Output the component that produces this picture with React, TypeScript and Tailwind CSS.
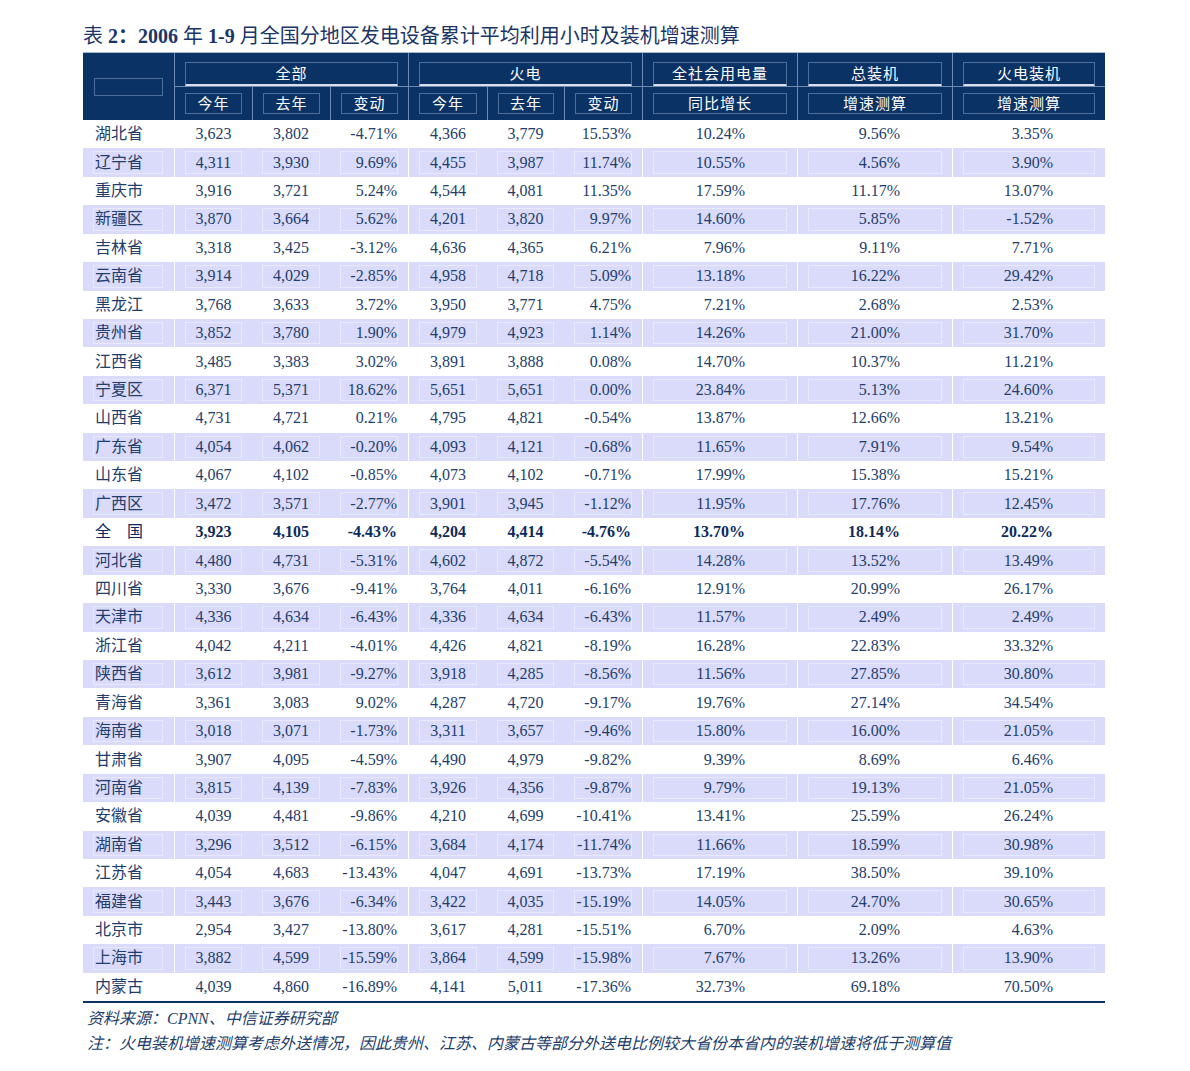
import React from "react";

type RowData = [string, string, string, string, string, string, string, string, string, string];

const rows: RowData[] = [
  ["湖北省", "3,623", "3,802", "-4.71%", "4,366", "3,779", "15.53%", "10.24%", "9.56%", "3.35%"],
  ["辽宁省", "4,311", "3,930", "9.69%", "4,455", "3,987", "11.74%", "10.55%", "4.56%", "3.90%"],
  ["重庆市", "3,916", "3,721", "5.24%", "4,544", "4,081", "11.35%", "17.59%", "11.17%", "13.07%"],
  ["新疆区", "3,870", "3,664", "5.62%", "4,201", "3,820", "9.97%", "14.60%", "5.85%", "-1.52%"],
  ["吉林省", "3,318", "3,425", "-3.12%", "4,636", "4,365", "6.21%", "7.96%", "9.11%", "7.71%"],
  ["云南省", "3,914", "4,029", "-2.85%", "4,958", "4,718", "5.09%", "13.18%", "16.22%", "29.42%"],
  ["黑龙江", "3,768", "3,633", "3.72%", "3,950", "3,771", "4.75%", "7.21%", "2.68%", "2.53%"],
  ["贵州省", "3,852", "3,780", "1.90%", "4,979", "4,923", "1.14%", "14.26%", "21.00%", "31.70%"],
  ["江西省", "3,485", "3,383", "3.02%", "3,891", "3,888", "0.08%", "14.70%", "10.37%", "11.21%"],
  ["宁夏区", "6,371", "5,371", "18.62%", "5,651", "5,651", "0.00%", "23.84%", "5.13%", "24.60%"],
  ["山西省", "4,731", "4,721", "0.21%", "4,795", "4,821", "-0.54%", "13.87%", "12.66%", "13.21%"],
  ["广东省", "4,054", "4,062", "-0.20%", "4,093", "4,121", "-0.68%", "11.65%", "7.91%", "9.54%"],
  ["山东省", "4,067", "4,102", "-0.85%", "4,073", "4,102", "-0.71%", "17.99%", "15.38%", "15.21%"],
  ["广西区", "3,472", "3,571", "-2.77%", "3,901", "3,945", "-1.12%", "11.95%", "17.76%", "12.45%"],
  ["全国", "3,923", "4,105", "-4.43%", "4,204", "4,414", "-4.76%", "13.70%", "18.14%", "20.22%"],
  ["河北省", "4,480", "4,731", "-5.31%", "4,602", "4,872", "-5.54%", "14.28%", "13.52%", "13.49%"],
  ["四川省", "3,330", "3,676", "-9.41%", "3,764", "4,011", "-6.16%", "12.91%", "20.99%", "26.17%"],
  ["天津市", "4,336", "4,634", "-6.43%", "4,336", "4,634", "-6.43%", "11.57%", "2.49%", "2.49%"],
  ["浙江省", "4,042", "4,211", "-4.01%", "4,426", "4,821", "-8.19%", "16.28%", "22.83%", "33.32%"],
  ["陕西省", "3,612", "3,981", "-9.27%", "3,918", "4,285", "-8.56%", "11.56%", "27.85%", "30.80%"],
  ["青海省", "3,361", "3,083", "9.02%", "4,287", "4,720", "-9.17%", "19.76%", "27.14%", "34.54%"],
  ["海南省", "3,018", "3,071", "-1.73%", "3,311", "3,657", "-9.46%", "15.80%", "16.00%", "21.05%"],
  ["甘肃省", "3,907", "4,095", "-4.59%", "4,490", "4,979", "-9.82%", "9.39%", "8.69%", "6.46%"],
  ["河南省", "3,815", "4,139", "-7.83%", "3,926", "4,356", "-9.87%", "9.79%", "19.13%", "21.05%"],
  ["安徽省", "4,039", "4,481", "-9.86%", "4,210", "4,699", "-10.41%", "13.41%", "25.59%", "26.24%"],
  ["湖南省", "3,296", "3,512", "-6.15%", "3,684", "4,174", "-11.74%", "11.66%", "18.59%", "30.98%"],
  ["江苏省", "4,054", "4,683", "-13.43%", "4,047", "4,691", "-13.73%", "17.19%", "38.50%", "39.10%"],
  ["福建省", "3,443", "3,676", "-6.34%", "3,422", "4,035", "-15.19%", "14.05%", "24.70%", "30.65%"],
  ["北京市", "2,954", "3,427", "-13.80%", "3,617", "4,281", "-15.51%", "6.70%", "2.09%", "4.63%"],
  ["上海市", "3,882", "4,599", "-15.59%", "3,864", "4,599", "-15.98%", "7.67%", "13.26%", "13.90%"],
  ["内蒙古", "4,039", "4,860", "-16.89%", "4,141", "5,011", "-17.36%", "32.73%", "69.18%", "70.50%"],
];

// column widths, left to right (label + 9 value columns)
const widths = [
  "w-[91px]",
  "w-[78px]",
  "w-[78px]",
  "w-[78px]",
  "w-[79px]",
  "w-[77px]",
  "w-[78px]",
  "w-[155px]",
  "w-[155px]",
  "w-[153px]",
];

const groupStart = [1, 4, 7, 8, 9];

function DataRow({ r, i }: { r: RowData; i: number }) {
  const shaded = i % 2 === 1;
  const total = r[0] === "全国";
  const boxBorder = shaded ? "border-[#e9e9fd]" : "border-transparent";

  return (
    <div
      className={`flex h-[28.43px] ${shaded ? "bg-[#dadbfb]" : "bg-white"} ${
        total ? "font-bold text-[#0e2a5c]" : "text-[#233d6b]"
      }`}
    >
      {r.map((v, c) => {
        const border = groupStart.includes(c) ? "border-l border-white" : "";
        if (c === 0) {
          return (
            <div key={c} className={`${widths[c]} pl-[10px] pr-[11px] py-[3px]`}>
              <div className={`h-full border ${boxBorder} flex items-center pl-[1px] font-normal`}>
                {total ? (
                  <span className="flex gap-[16px]">
                    <span>全</span>
                    <span>国</span>
                  </span>
                ) : (
                  v
                )}
              </div>
            </div>
          );
        }
        const change = c === 3 || c === 6;
        const wide = c >= 7;
        return (
          <div key={c} className={`${widths[c]} ${border} pl-[10px] pr-[10px] py-[3px]`}>
            <div
              className={`h-full border ${boxBorder} flex items-center ${
                wide ? "justify-end pr-[41px]" : change ? "justify-end pr-[0px]" : "justify-center"
              }`}
            >
              {v}
            </div>
          </div>
        );
      })}
    </div>
  );
}

function GroupHead({ label, w }: { label: string; w: string }) {
  return (
    <div className={`${w} border-l border-[#6f89b0] pl-[10px] pr-[10px] pt-[9px]`}>
      <div className="h-[24px] border border-[#4d6d9b] border-b-2 border-b-[#d7e0ec] flex items-center justify-center">
        {label}
      </div>
    </div>
  );
}

function SubHead({ label, w }: { label: string; w: string }) {
  return (
    <div className={`${w} border-l border-[#6f89b0] pl-[10px] pr-[10px] pt-[6px]`}>
      <div className="h-[21px] border border-[#4d6d9b] flex items-center justify-center">{label}</div>
    </div>
  );
}

export default function App() {
  return (
    <div className="min-h-screen bg-white pl-[83px] pt-[22px] font-['Liberation_Serif','Noto_Sans_CJK_SC',serif]">
      {/* title */}
      <h1 className="h-[30px] text-[20px] leading-[28px] text-[#1c3567]">
        表 <b>2：2006</b> 年 <b>1-9</b> 月全国分地区发电设备累计平均利用小时及装机增速测算
      </h1>

      <div className="w-[1022px]">
        {/* header */}
        <div className="flex h-[68px] bg-[#0b3264] border-t border-[#a9b8cf] text-white text-[15px] tracking-[1px] font-['Noto_Sans_CJK_SC',sans-serif]">
          <div className="w-[91px] flex items-center pl-[11px] pr-[11px]">
            <div className="w-full h-[18px] border border-[#4d6d9b]" />
          </div>
          <div className="flex-1 flex flex-col">
            <div className="flex h-[33px]">
              <GroupHead label="全部" w="w-[234px]" />
              <GroupHead label="火电" w="w-[234px]" />
              <GroupHead label="全社会用电量" w="w-[155px]" />
              <GroupHead label="总装机" w="w-[155px]" />
              <GroupHead label="火电装机" w="w-[153px]" />
            </div>
            <div className="flex h-[34px] border-t border-[#6f89b0]">
              <SubHead label="今年" w="w-[78px]" />
              <SubHead label="去年" w="w-[78px]" />
              <SubHead label="变动" w="w-[78px]" />
              <SubHead label="今年" w="w-[79px]" />
              <SubHead label="去年" w="w-[77px]" />
              <SubHead label="变动" w="w-[78px]" />
              <SubHead label="同比增长" w="w-[155px]" />
              <SubHead label="增速测算" w="w-[155px]" />
              <SubHead label="增速测算" w="w-[153px]" />
            </div>
          </div>
        </div>

        {/* body */}
        <div className="text-[16px] border-b-2 border-[#0b3264]">
          {rows.map((r, i) => (
            <DataRow key={r[0]} r={r} i={i} />
          ))}
        </div>
      </div>

      {/* footnotes */}
      <div className="pt-[3px] pl-[4px] italic text-[16px] leading-[25px] text-[#233d6b]">
        <p>资料来源：CPNN、中信证券研究部</p>
        <p>注：火电装机增速测算考虑外送情况，因此贵州、江苏、内蒙古等部分外送电比例较大省份本省内的装机增速将低于测算值</p>
      </div>
    </div>
  );
}
